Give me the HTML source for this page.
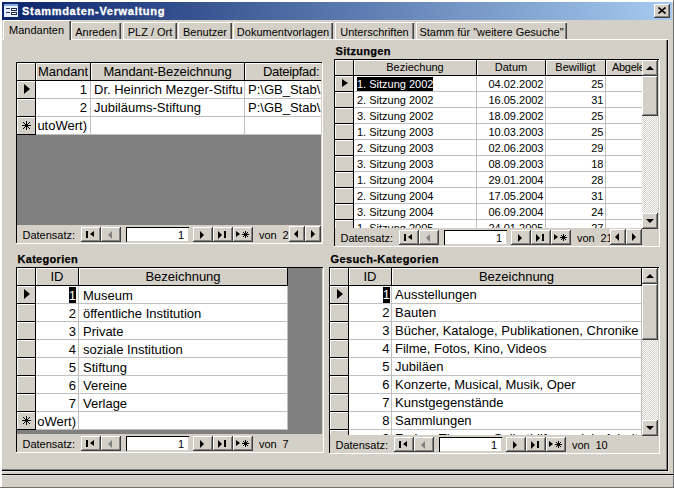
<!DOCTYPE html>
<html><head><meta charset="utf-8"><style>
*{margin:0;padding:0;box-sizing:border-box}
html,body{width:674px;height:488px;overflow:hidden}
body{position:relative;background:#d4d0c8;font-family:"Liberation Sans", sans-serif;color:#000}
.a{position:absolute}
.t{position:absolute;white-space:nowrap}
</style></head><body>
<div class="a" style="left:0px;top:0px;width:674px;height:488px;background:#d4d0c8;box-shadow:inset -1px -1px #707070,inset 2px 2px #fff;"></div>
<div class="a" style="left:2px;top:2px;width:670px;height:18px;background:linear-gradient(to right,#0a246a,#a6caf0);"></div>
<div class="a" style="left:4px;top:4px;width:14px;height:13px;background:#e6eefc;"></div>
<div class="a" style="left:4px;top:4px;width:14px;height:2px;background:#88a8e0;"></div>
<div class="a" style="left:6px;top:8px;width:4px;height:1px;background:#203050;"></div>
<div class="a" style="left:11px;top:8px;width:6px;height:3px;background:#fff;border:1px solid #203050;"></div>
<div class="a" style="left:6px;top:12px;width:4px;height:1px;background:#203050;"></div>
<div class="a" style="left:11px;top:12px;width:6px;height:3px;background:#fff;border:1px solid #203050;"></div>
<div class="t" style="left:22px;top:5.69px;font-size:11px;line-height:11px;font-weight:bold;color:#fff;letter-spacing:0.7px;-webkit-text-stroke:0.3px #fff;">Stammdaten-Verwaltung</div>
<div class="a" style="left:654px;top:4px;width:16px;height:14px;background:#d4d0c8;box-shadow:inset -1px -1px #404040,inset 1px 1px #fff,inset -2px -2px #808080;"></div>
<svg class="a" style="left:658px;top:7px" width="8" height="7" viewBox="0 0 8 7"><path d="M0.5 0.5L7.5 6.5M7.5 0.5L0.5 6.5" stroke="#000" stroke-width="1.6"/></svg>
<div class="a" style="left:2px;top:39px;width:666px;height:432px;box-shadow:inset 0 1px #fff,inset -1px -1px #000,inset -2px -2px #808080;"></div>
<div class="a" style="left:2px;top:474px;width:671px;height:1px;background:#000;"></div>
<div class="a" style="left:2px;top:475px;width:671px;height:1px;background:#e4e2de;"></div>
<div class="a" style="left:2px;top:471px;width:666px;height:1px;background:#e4e2de;"></div>
<div class="a" style="left:668px;top:39px;width:1px;height:435px;background:#e4e2de;"></div>
<div class="a" style="left:71px;top:22px;width:50px;height:17px;background:#d4d0c8;box-shadow:inset 1px 1px #fff,inset -1px 0 #404040,inset -2px 0 #808080;"></div>
<div class="t" style="left:71px;top:27.19px;font-size:11px;line-height:11px;width:50px;text-align:center;">Anreden</div>
<div class="a" style="left:123px;top:22px;width:54px;height:17px;background:#d4d0c8;box-shadow:inset 1px 1px #fff,inset -1px 0 #404040,inset -2px 0 #808080;"></div>
<div class="t" style="left:123px;top:27.19px;font-size:11px;line-height:11px;width:54px;text-align:center;">PLZ / Ort</div>
<div class="a" style="left:178px;top:22px;width:54px;height:17px;background:#d4d0c8;box-shadow:inset 1px 1px #fff,inset -1px 0 #404040,inset -2px 0 #808080;"></div>
<div class="t" style="left:178px;top:27.19px;font-size:11px;line-height:11px;width:54px;text-align:center;">Benutzer</div>
<div class="a" style="left:233px;top:22px;width:100px;height:17px;background:#d4d0c8;box-shadow:inset 1px 1px #fff,inset -1px 0 #404040,inset -2px 0 #808080;"></div>
<div class="t" style="left:233px;top:27.19px;font-size:11px;line-height:11px;width:100px;text-align:center;">Dokumentvorlagen</div>
<div class="a" style="left:335px;top:22px;width:79px;height:17px;background:#d4d0c8;box-shadow:inset 1px 1px #fff,inset -1px 0 #404040,inset -2px 0 #808080;"></div>
<div class="t" style="left:335px;top:27.19px;font-size:11px;line-height:11px;width:79px;text-align:center;">Unterschriften</div>
<div class="a" style="left:416px;top:22px;width:151px;height:17px;background:#d4d0c8;box-shadow:inset 1px 1px #fff,inset -1px 0 #404040,inset -2px 0 #808080;"></div>
<div class="t" style="left:416px;top:27.19px;font-size:11px;line-height:11px;width:151px;text-align:center;">Stamm für "weitere Gesuche"</div>
<div class="a" style="left:3px;top:20px;width:68px;height:20px;background:#d4d0c8;box-shadow:inset 1px 1px #fff,inset -1px 0 #404040,inset -2px 0 #808080;"></div>
<div class="a" style="left:4px;top:39px;width:65px;height:1px;background:#d4d0c8;"></div>
<div class="t" style="left:9px;top:24.69px;font-size:11px;line-height:11px;">Mandanten</div>
<div class="a" style="left:15px;top:61px;width:308px;height:183px;background:#d4d0c8;box-shadow:inset 1px 1px #d4d0c8,inset -1px -1px #fff,inset 2px 2px #000,inset -2px -2px #d4d0c8;"></div>
<div class="a" style="left:17px;top:63px;width:304px;height:162px;overflow:hidden;background:#808080;font-size:13px;line-height:13px;">
<div class="a" style="left:0px;top:0px;width:19px;height:18px;background:#d4d0c8;box-shadow:inset 1px 1px #fff;border-right:1px solid #000;border-bottom:1px solid #000;"></div>
<div class="a" style="left:19px;top:0px;width:55px;height:18px;background:#d4d0c8;box-shadow:inset 1px 1px #fff;border-right:1px solid #000;border-bottom:1px solid #000;"></div>
<div class="t" style="left:19px;top:2.00px;width:54px;text-align:center;font-size:13px;line-height:13px;letter-spacing:-0.1px">Mandant</div>
<div class="a" style="left:74px;top:0px;width:154px;height:18px;background:#d4d0c8;box-shadow:inset 1px 1px #fff;border-right:1px solid #000;border-bottom:1px solid #000;"></div>
<div class="t" style="left:74px;top:2.00px;width:153px;text-align:center;font-size:13px;line-height:13px;letter-spacing:-0.1px">Mandant-Bezeichnung</div>
<div class="a" style="left:228px;top:0px;width:120px;height:18px;background:#d4d0c8;box-shadow:inset 1px 1px #fff;border-right:1px solid #000;border-bottom:1px solid #000;"></div>
<div class="t" style="left:246px;top:2.00px;font-size:13px;line-height:13px;letter-spacing:-0.3px">Dateipfad:</div>
<div class="a" style="left:0px;top:18px;width:19px;height:18px;background:#d4d0c8;box-shadow:inset 1px 1px #fff;border-right:1px solid #000;border-bottom:1px solid #000;"></div>
<div class="a" style="left:7px;top:21.0px;width:0;height:0;border-left:6px solid #000;border-top:5.5px solid transparent;border-bottom:5.5px solid transparent;"></div>
<div class="a" style="left:19px;top:18px;width:55px;height:18px;background:#fff;border-right:1px solid #c0c0c0;border-bottom:1px solid #c0c0c0;"></div>
<div class="a" style="left:19px;top:18px;width:51px;height:17px;overflow:hidden;"><div class="t" style="right:0;top:2.30px;">1</div></div>
<div class="a" style="left:74px;top:18px;width:154px;height:18px;background:#fff;border-right:1px solid #c0c0c0;border-bottom:1px solid #c0c0c0;"></div>
<div class="a" style="left:74px;top:18px;width:153px;height:17px;overflow:hidden;"><div class="t" style="left:3px;top:2.30px;">Dr. Heinrich Mezger-Stiftu</div></div>
<div class="a" style="left:228px;top:18px;width:120px;height:18px;background:#fff;border-right:1px solid #c0c0c0;border-bottom:1px solid #c0c0c0;"></div>
<div class="a" style="left:228px;top:18px;width:119px;height:17px;overflow:hidden;"><div class="t" style="left:3px;top:2.30px;">P:\GB_Stab\Stiftung</div></div>
<div class="a" style="left:0px;top:36px;width:19px;height:18px;background:#d4d0c8;box-shadow:inset 1px 1px #fff;border-right:1px solid #000;border-bottom:1px solid #000;"></div>
<div class="a" style="left:19px;top:36px;width:55px;height:18px;background:#fff;border-right:1px solid #c0c0c0;border-bottom:1px solid #c0c0c0;"></div>
<div class="a" style="left:19px;top:36px;width:51px;height:17px;overflow:hidden;"><div class="t" style="right:0;top:2.30px;">2</div></div>
<div class="a" style="left:74px;top:36px;width:154px;height:18px;background:#fff;border-right:1px solid #c0c0c0;border-bottom:1px solid #c0c0c0;"></div>
<div class="a" style="left:74px;top:36px;width:153px;height:17px;overflow:hidden;"><div class="t" style="left:3px;top:2.30px;">Jubiläums-Stiftung</div></div>
<div class="a" style="left:228px;top:36px;width:120px;height:18px;background:#fff;border-right:1px solid #c0c0c0;border-bottom:1px solid #c0c0c0;"></div>
<div class="a" style="left:228px;top:36px;width:119px;height:17px;overflow:hidden;"><div class="t" style="left:3px;top:2.30px;">P:\GB_Stab\Stiftung</div></div>
<div class="a" style="left:0px;top:54px;width:19px;height:18px;background:#d4d0c8;box-shadow:inset 1px 1px #fff;border-right:1px solid #000;border-bottom:1px solid #000;"></div>
<svg class="a" style="left:5px;top:58px" width="9" height="9" viewBox="0 0 9 9" shape-rendering="crispEdges"><path d="M4 0h1v9h-1zM0 4h9v1h-9zM3 3h3v3h-3zM1 1h1v1h-1zM2 2h1v1h-1zM7 1h1v1h-1zM6 2h1v1h-1zM1 7h1v1h-1zM2 6h1v1h-1zM7 7h1v1h-1zM6 6h1v1h-1z" fill="#000"/></svg>
<div class="a" style="left:19px;top:54px;width:55px;height:18px;background:#fff;border-right:1px solid #c0c0c0;border-bottom:1px solid #c0c0c0;"></div>
<div class="a" style="left:19px;top:54px;width:51px;height:17px;overflow:hidden;"><div class="t" style="right:0;top:2.30px;">utoWert)</div></div>
<div class="a" style="left:74px;top:54px;width:154px;height:18px;background:#fff;border-right:1px solid #c0c0c0;border-bottom:1px solid #c0c0c0;"></div>
<div class="a" style="left:228px;top:54px;width:120px;height:18px;background:#fff;border-right:1px solid #c0c0c0;border-bottom:1px solid #c0c0c0;"></div>
</div>
<div class="a" style="left:17px;top:225px;width:304px;height:17px;background:#d4d0c8;"></div>
<div class="t" style="left:22.5px;top:230.19px;font-size:11px;line-height:11px;">Datensatz:</div>
<div class="a" style="left:81px;top:227px;width:20px;height:15px;background:#d4d0c8;box-shadow:inset -1px -1px #404040,inset 1px 1px #fff,inset -2px -2px #808080;"></div>
<div class="a" style="left:86px;top:231px;width:2px;height:7px;background:#000;"></div>
<div class="a" style="left:90px;top:231px;width:0px;height:0px;border-right:4px solid #000;border-top:3.5px solid transparent;border-bottom:3.5px solid transparent;"></div>
<div class="a" style="left:101px;top:227px;width:20px;height:15px;background:#d4d0c8;box-shadow:inset -1px -1px #404040,inset 1px 1px #fff,inset -2px -2px #808080;"></div>
<div class="a" style="left:108px;top:230.5px;width:0px;height:0px;border-right:4px solid #808080;border-top:4px solid transparent;border-bottom:4px solid transparent;"></div>
<div class="a" style="left:126px;top:227px;width:63px;height:15px;background:#fff;box-shadow:inset 1px 1px #000,inset -1px -1px #d4d0c8;"></div>
<div class="t" style="left:126px;top:230.19px;font-size:11px;line-height:11px;width:58px;text-align:right;">1</div>
<div class="a" style="left:193px;top:227px;width:20px;height:15px;background:#d4d0c8;box-shadow:inset -1px -1px #404040,inset 1px 1px #fff,inset -2px -2px #808080;"></div>
<div class="a" style="left:200px;top:230.5px;width:0px;height:0px;border-left:4px solid #000;border-top:4px solid transparent;border-bottom:4px solid transparent;"></div>
<div class="a" style="left:213px;top:227px;width:20px;height:15px;background:#d4d0c8;box-shadow:inset -1px -1px #404040,inset 1px 1px #fff,inset -2px -2px #808080;"></div>
<div class="a" style="left:218px;top:230.5px;width:0px;height:0px;border-left:4px solid #000;border-top:4px solid transparent;border-bottom:4px solid transparent;"></div>
<div class="a" style="left:224px;top:231px;width:2px;height:7px;background:#000;"></div>
<div class="a" style="left:233px;top:227px;width:20px;height:15px;background:#d4d0c8;box-shadow:inset -1px -1px #404040,inset 1px 1px #fff,inset -2px -2px #808080;"></div>
<div class="a" style="left:236px;top:231px;width:0px;height:0px;border-left:4px solid #000;border-top:3.5px solid transparent;border-bottom:3.5px solid transparent;"></div>
<svg class="a" style="left:242px;top:231px" width="7" height="7" viewBox="0 0 7 7" shape-rendering="crispEdges"><path d="M3 0h1v7h-1zM0 3h7v1h-7zM2 2h3v3h-3zM1 1h1v1h-1zM5 1h1v1h-1zM1 5h1v1h-1zM5 5h1v1h-1z" fill="#000"/></svg>
<div class="t" style="left:259px;top:230.19px;font-size:11px;line-height:11px;">von</div>
<div class="t" style="left:282.5px;top:230.19px;font-size:11px;line-height:11px;">2</div>
<div class="a" style="left:289px;top:226px;width:16px;height:16px;background:#d4d0c8;box-shadow:inset -1px -1px #404040,inset 1px 1px #fff,inset -2px -2px #808080;"></div>
<div class="a" style="left:294px;top:230px;width:0px;height:0px;border-right:4px solid #000;border-top:4px solid transparent;border-bottom:4px solid transparent;"></div>
<div class="a" style="left:305px;top:226px;width:16px;height:16px;background:#d4d0c8;box-shadow:inset -1px -1px #404040,inset 1px 1px #fff,inset -2px -2px #808080;"></div>
<div class="a" style="left:311px;top:230px;width:0px;height:0px;border-left:4px solid #000;border-top:4px solid transparent;border-bottom:4px solid transparent;"></div>
<div class="a" style="left:333px;top:58px;width:327px;height:189px;background:#d4d0c8;box-shadow:inset 1px 1px #d4d0c8,inset -1px -1px #fff,inset 2px 2px #000,inset -2px -2px #d4d0c8;"></div>
<div class="a" style="left:335px;top:60px;width:307px;height:168px;overflow:hidden;background:#808080;font-size:11px;line-height:11px;">
<div class="a" style="left:0px;top:0px;width:19px;height:16px;background:#d4d0c8;box-shadow:inset 1px 1px #fff;border-right:1px solid #000;border-bottom:1px solid #000;"></div>
<div class="a" style="left:19px;top:0px;width:123px;height:16px;background:#d4d0c8;box-shadow:inset 1px 1px #fff;border-right:1px solid #000;border-bottom:1px solid #000;"></div>
<div class="t" style="left:19px;top:2.19px;width:122px;text-align:center;font-size:11px;line-height:11px;letter-spacing:0px">Beziechung</div>
<div class="a" style="left:142px;top:0px;width:69px;height:16px;background:#d4d0c8;box-shadow:inset 1px 1px #fff;border-right:1px solid #000;border-bottom:1px solid #000;"></div>
<div class="t" style="left:142px;top:2.19px;width:68px;text-align:center;font-size:11px;line-height:11px;letter-spacing:0px">Datum</div>
<div class="a" style="left:211px;top:0px;width:60px;height:16px;background:#d4d0c8;box-shadow:inset 1px 1px #fff;border-right:1px solid #000;border-bottom:1px solid #000;"></div>
<div class="t" style="left:211px;top:2.19px;width:59px;text-align:center;font-size:11px;line-height:11px;letter-spacing:0px">Bewilligt</div>
<div class="a" style="left:271px;top:0px;width:80px;height:16px;background:#d4d0c8;box-shadow:inset 1px 1px #fff;border-right:1px solid #000;border-bottom:1px solid #000;"></div>
<div class="t" style="left:277px;top:2.19px;font-size:11px;line-height:11px;letter-spacing:-0.3px">Abgelehnt</div>
<div class="a" style="left:0px;top:16px;width:19px;height:16px;background:#d4d0c8;box-shadow:inset 1px 1px #fff;border-right:1px solid #000;border-bottom:1px solid #000;"></div>
<div class="a" style="left:7px;top:19.0px;width:0;height:0;border-left:6px solid #000;border-top:4.5px solid transparent;border-bottom:4.5px solid transparent;"></div>
<div class="a" style="left:19px;top:16px;width:123px;height:16px;background:#fff;border-right:1px solid #c0c0c0;border-bottom:1px solid #c0c0c0;"></div>
<div class="a" style="left:19px;top:16px;width:122px;height:15px;overflow:hidden;"><div class="a" style="left:3px;top:1px;height:14px;background:#000;color:#fff;white-space:nowrap"><span style="position:relative;top:1.89px">1. Sitzung 2002</span></div></div>
<div class="a" style="left:142px;top:16px;width:69px;height:16px;background:#fff;border-right:1px solid #c0c0c0;border-bottom:1px solid #c0c0c0;"></div>
<div class="a" style="left:142px;top:16px;width:66.5px;height:15px;overflow:hidden;"><div class="t" style="right:0;top:2.89px;">04.02.2002</div></div>
<div class="a" style="left:211px;top:16px;width:60px;height:16px;background:#fff;border-right:1px solid #c0c0c0;border-bottom:1px solid #c0c0c0;"></div>
<div class="a" style="left:211px;top:16px;width:57.5px;height:15px;overflow:hidden;"><div class="t" style="right:0;top:2.89px;">25</div></div>
<div class="a" style="left:271px;top:16px;width:80px;height:16px;background:#fff;border-right:1px solid #c0c0c0;border-bottom:1px solid #c0c0c0;"></div>
<div class="a" style="left:0px;top:32px;width:19px;height:16px;background:#d4d0c8;box-shadow:inset 1px 1px #fff;border-right:1px solid #000;border-bottom:1px solid #000;"></div>
<div class="a" style="left:19px;top:32px;width:123px;height:16px;background:#fff;border-right:1px solid #c0c0c0;border-bottom:1px solid #c0c0c0;"></div>
<div class="a" style="left:19px;top:32px;width:122px;height:15px;overflow:hidden;"><div class="t" style="left:3px;top:2.89px;">2. Sitzung 2002</div></div>
<div class="a" style="left:142px;top:32px;width:69px;height:16px;background:#fff;border-right:1px solid #c0c0c0;border-bottom:1px solid #c0c0c0;"></div>
<div class="a" style="left:142px;top:32px;width:66.5px;height:15px;overflow:hidden;"><div class="t" style="right:0;top:2.89px;">16.05.2002</div></div>
<div class="a" style="left:211px;top:32px;width:60px;height:16px;background:#fff;border-right:1px solid #c0c0c0;border-bottom:1px solid #c0c0c0;"></div>
<div class="a" style="left:211px;top:32px;width:57.5px;height:15px;overflow:hidden;"><div class="t" style="right:0;top:2.89px;">31</div></div>
<div class="a" style="left:271px;top:32px;width:80px;height:16px;background:#fff;border-right:1px solid #c0c0c0;border-bottom:1px solid #c0c0c0;"></div>
<div class="a" style="left:0px;top:48px;width:19px;height:16px;background:#d4d0c8;box-shadow:inset 1px 1px #fff;border-right:1px solid #000;border-bottom:1px solid #000;"></div>
<div class="a" style="left:19px;top:48px;width:123px;height:16px;background:#fff;border-right:1px solid #c0c0c0;border-bottom:1px solid #c0c0c0;"></div>
<div class="a" style="left:19px;top:48px;width:122px;height:15px;overflow:hidden;"><div class="t" style="left:3px;top:2.89px;">3. Sitzung 2002</div></div>
<div class="a" style="left:142px;top:48px;width:69px;height:16px;background:#fff;border-right:1px solid #c0c0c0;border-bottom:1px solid #c0c0c0;"></div>
<div class="a" style="left:142px;top:48px;width:66.5px;height:15px;overflow:hidden;"><div class="t" style="right:0;top:2.89px;">18.09.2002</div></div>
<div class="a" style="left:211px;top:48px;width:60px;height:16px;background:#fff;border-right:1px solid #c0c0c0;border-bottom:1px solid #c0c0c0;"></div>
<div class="a" style="left:211px;top:48px;width:57.5px;height:15px;overflow:hidden;"><div class="t" style="right:0;top:2.89px;">25</div></div>
<div class="a" style="left:271px;top:48px;width:80px;height:16px;background:#fff;border-right:1px solid #c0c0c0;border-bottom:1px solid #c0c0c0;"></div>
<div class="a" style="left:0px;top:64px;width:19px;height:16px;background:#d4d0c8;box-shadow:inset 1px 1px #fff;border-right:1px solid #000;border-bottom:1px solid #000;"></div>
<div class="a" style="left:19px;top:64px;width:123px;height:16px;background:#fff;border-right:1px solid #c0c0c0;border-bottom:1px solid #c0c0c0;"></div>
<div class="a" style="left:19px;top:64px;width:122px;height:15px;overflow:hidden;"><div class="t" style="left:3px;top:2.89px;">1. Sitzung 2003</div></div>
<div class="a" style="left:142px;top:64px;width:69px;height:16px;background:#fff;border-right:1px solid #c0c0c0;border-bottom:1px solid #c0c0c0;"></div>
<div class="a" style="left:142px;top:64px;width:66.5px;height:15px;overflow:hidden;"><div class="t" style="right:0;top:2.89px;">10.03.2003</div></div>
<div class="a" style="left:211px;top:64px;width:60px;height:16px;background:#fff;border-right:1px solid #c0c0c0;border-bottom:1px solid #c0c0c0;"></div>
<div class="a" style="left:211px;top:64px;width:57.5px;height:15px;overflow:hidden;"><div class="t" style="right:0;top:2.89px;">25</div></div>
<div class="a" style="left:271px;top:64px;width:80px;height:16px;background:#fff;border-right:1px solid #c0c0c0;border-bottom:1px solid #c0c0c0;"></div>
<div class="a" style="left:0px;top:80px;width:19px;height:16px;background:#d4d0c8;box-shadow:inset 1px 1px #fff;border-right:1px solid #000;border-bottom:1px solid #000;"></div>
<div class="a" style="left:19px;top:80px;width:123px;height:16px;background:#fff;border-right:1px solid #c0c0c0;border-bottom:1px solid #c0c0c0;"></div>
<div class="a" style="left:19px;top:80px;width:122px;height:15px;overflow:hidden;"><div class="t" style="left:3px;top:2.89px;">2. Sitzung 2003</div></div>
<div class="a" style="left:142px;top:80px;width:69px;height:16px;background:#fff;border-right:1px solid #c0c0c0;border-bottom:1px solid #c0c0c0;"></div>
<div class="a" style="left:142px;top:80px;width:66.5px;height:15px;overflow:hidden;"><div class="t" style="right:0;top:2.89px;">02.06.2003</div></div>
<div class="a" style="left:211px;top:80px;width:60px;height:16px;background:#fff;border-right:1px solid #c0c0c0;border-bottom:1px solid #c0c0c0;"></div>
<div class="a" style="left:211px;top:80px;width:57.5px;height:15px;overflow:hidden;"><div class="t" style="right:0;top:2.89px;">29</div></div>
<div class="a" style="left:271px;top:80px;width:80px;height:16px;background:#fff;border-right:1px solid #c0c0c0;border-bottom:1px solid #c0c0c0;"></div>
<div class="a" style="left:0px;top:96px;width:19px;height:16px;background:#d4d0c8;box-shadow:inset 1px 1px #fff;border-right:1px solid #000;border-bottom:1px solid #000;"></div>
<div class="a" style="left:19px;top:96px;width:123px;height:16px;background:#fff;border-right:1px solid #c0c0c0;border-bottom:1px solid #c0c0c0;"></div>
<div class="a" style="left:19px;top:96px;width:122px;height:15px;overflow:hidden;"><div class="t" style="left:3px;top:2.89px;">3. Sitzung 2003</div></div>
<div class="a" style="left:142px;top:96px;width:69px;height:16px;background:#fff;border-right:1px solid #c0c0c0;border-bottom:1px solid #c0c0c0;"></div>
<div class="a" style="left:142px;top:96px;width:66.5px;height:15px;overflow:hidden;"><div class="t" style="right:0;top:2.89px;">08.09.2003</div></div>
<div class="a" style="left:211px;top:96px;width:60px;height:16px;background:#fff;border-right:1px solid #c0c0c0;border-bottom:1px solid #c0c0c0;"></div>
<div class="a" style="left:211px;top:96px;width:57.5px;height:15px;overflow:hidden;"><div class="t" style="right:0;top:2.89px;">18</div></div>
<div class="a" style="left:271px;top:96px;width:80px;height:16px;background:#fff;border-right:1px solid #c0c0c0;border-bottom:1px solid #c0c0c0;"></div>
<div class="a" style="left:0px;top:112px;width:19px;height:16px;background:#d4d0c8;box-shadow:inset 1px 1px #fff;border-right:1px solid #000;border-bottom:1px solid #000;"></div>
<div class="a" style="left:19px;top:112px;width:123px;height:16px;background:#fff;border-right:1px solid #c0c0c0;border-bottom:1px solid #c0c0c0;"></div>
<div class="a" style="left:19px;top:112px;width:122px;height:15px;overflow:hidden;"><div class="t" style="left:3px;top:2.89px;">1. Sitzung 2004</div></div>
<div class="a" style="left:142px;top:112px;width:69px;height:16px;background:#fff;border-right:1px solid #c0c0c0;border-bottom:1px solid #c0c0c0;"></div>
<div class="a" style="left:142px;top:112px;width:66.5px;height:15px;overflow:hidden;"><div class="t" style="right:0;top:2.89px;">29.01.2004</div></div>
<div class="a" style="left:211px;top:112px;width:60px;height:16px;background:#fff;border-right:1px solid #c0c0c0;border-bottom:1px solid #c0c0c0;"></div>
<div class="a" style="left:211px;top:112px;width:57.5px;height:15px;overflow:hidden;"><div class="t" style="right:0;top:2.89px;">28</div></div>
<div class="a" style="left:271px;top:112px;width:80px;height:16px;background:#fff;border-right:1px solid #c0c0c0;border-bottom:1px solid #c0c0c0;"></div>
<div class="a" style="left:0px;top:128px;width:19px;height:16px;background:#d4d0c8;box-shadow:inset 1px 1px #fff;border-right:1px solid #000;border-bottom:1px solid #000;"></div>
<div class="a" style="left:19px;top:128px;width:123px;height:16px;background:#fff;border-right:1px solid #c0c0c0;border-bottom:1px solid #c0c0c0;"></div>
<div class="a" style="left:19px;top:128px;width:122px;height:15px;overflow:hidden;"><div class="t" style="left:3px;top:2.89px;">2. Sitzung 2004</div></div>
<div class="a" style="left:142px;top:128px;width:69px;height:16px;background:#fff;border-right:1px solid #c0c0c0;border-bottom:1px solid #c0c0c0;"></div>
<div class="a" style="left:142px;top:128px;width:66.5px;height:15px;overflow:hidden;"><div class="t" style="right:0;top:2.89px;">17.05.2004</div></div>
<div class="a" style="left:211px;top:128px;width:60px;height:16px;background:#fff;border-right:1px solid #c0c0c0;border-bottom:1px solid #c0c0c0;"></div>
<div class="a" style="left:211px;top:128px;width:57.5px;height:15px;overflow:hidden;"><div class="t" style="right:0;top:2.89px;">31</div></div>
<div class="a" style="left:271px;top:128px;width:80px;height:16px;background:#fff;border-right:1px solid #c0c0c0;border-bottom:1px solid #c0c0c0;"></div>
<div class="a" style="left:0px;top:144px;width:19px;height:16px;background:#d4d0c8;box-shadow:inset 1px 1px #fff;border-right:1px solid #000;border-bottom:1px solid #000;"></div>
<div class="a" style="left:19px;top:144px;width:123px;height:16px;background:#fff;border-right:1px solid #c0c0c0;border-bottom:1px solid #c0c0c0;"></div>
<div class="a" style="left:19px;top:144px;width:122px;height:15px;overflow:hidden;"><div class="t" style="left:3px;top:2.89px;">3. Sitzung 2004</div></div>
<div class="a" style="left:142px;top:144px;width:69px;height:16px;background:#fff;border-right:1px solid #c0c0c0;border-bottom:1px solid #c0c0c0;"></div>
<div class="a" style="left:142px;top:144px;width:66.5px;height:15px;overflow:hidden;"><div class="t" style="right:0;top:2.89px;">06.09.2004</div></div>
<div class="a" style="left:211px;top:144px;width:60px;height:16px;background:#fff;border-right:1px solid #c0c0c0;border-bottom:1px solid #c0c0c0;"></div>
<div class="a" style="left:211px;top:144px;width:57.5px;height:15px;overflow:hidden;"><div class="t" style="right:0;top:2.89px;">24</div></div>
<div class="a" style="left:271px;top:144px;width:80px;height:16px;background:#fff;border-right:1px solid #c0c0c0;border-bottom:1px solid #c0c0c0;"></div>
<div class="a" style="left:0px;top:160px;width:19px;height:16px;background:#d4d0c8;box-shadow:inset 1px 1px #fff;border-right:1px solid #000;border-bottom:1px solid #000;"></div>
<div class="a" style="left:19px;top:160px;width:123px;height:16px;background:#fff;border-right:1px solid #c0c0c0;border-bottom:1px solid #c0c0c0;"></div>
<div class="a" style="left:19px;top:160px;width:122px;height:15px;overflow:hidden;"><div class="t" style="left:3px;top:2.89px;">1. Sitzung 2005</div></div>
<div class="a" style="left:142px;top:160px;width:69px;height:16px;background:#fff;border-right:1px solid #c0c0c0;border-bottom:1px solid #c0c0c0;"></div>
<div class="a" style="left:142px;top:160px;width:66.5px;height:15px;overflow:hidden;"><div class="t" style="right:0;top:2.89px;">24.01.2005</div></div>
<div class="a" style="left:211px;top:160px;width:60px;height:16px;background:#fff;border-right:1px solid #c0c0c0;border-bottom:1px solid #c0c0c0;"></div>
<div class="a" style="left:211px;top:160px;width:57.5px;height:15px;overflow:hidden;"><div class="t" style="right:0;top:2.89px;">27</div></div>
<div class="a" style="left:271px;top:160px;width:80px;height:16px;background:#fff;border-right:1px solid #c0c0c0;border-bottom:1px solid #c0c0c0;"></div>
</div>
<div class="a" style="left:335px;top:228px;width:323px;height:17px;background:#d4d0c8;"></div>
<div class="t" style="left:340.5px;top:233.19px;font-size:11px;line-height:11px;">Datensatz:</div>
<div class="a" style="left:399px;top:230px;width:20px;height:15px;background:#d4d0c8;box-shadow:inset -1px -1px #404040,inset 1px 1px #fff,inset -2px -2px #808080;"></div>
<div class="a" style="left:404px;top:234px;width:2px;height:7px;background:#000;"></div>
<div class="a" style="left:408px;top:234px;width:0px;height:0px;border-right:4px solid #000;border-top:3.5px solid transparent;border-bottom:3.5px solid transparent;"></div>
<div class="a" style="left:419px;top:230px;width:20px;height:15px;background:#d4d0c8;box-shadow:inset -1px -1px #404040,inset 1px 1px #fff,inset -2px -2px #808080;"></div>
<div class="a" style="left:426px;top:233.5px;width:0px;height:0px;border-right:4px solid #808080;border-top:4px solid transparent;border-bottom:4px solid transparent;"></div>
<div class="a" style="left:444px;top:230px;width:63px;height:15px;background:#fff;box-shadow:inset 1px 1px #000,inset -1px -1px #d4d0c8;"></div>
<div class="t" style="left:444px;top:233.19px;font-size:11px;line-height:11px;width:58px;text-align:right;">1</div>
<div class="a" style="left:511px;top:230px;width:20px;height:15px;background:#d4d0c8;box-shadow:inset -1px -1px #404040,inset 1px 1px #fff,inset -2px -2px #808080;"></div>
<div class="a" style="left:518px;top:233.5px;width:0px;height:0px;border-left:4px solid #000;border-top:4px solid transparent;border-bottom:4px solid transparent;"></div>
<div class="a" style="left:531px;top:230px;width:20px;height:15px;background:#d4d0c8;box-shadow:inset -1px -1px #404040,inset 1px 1px #fff,inset -2px -2px #808080;"></div>
<div class="a" style="left:536px;top:233.5px;width:0px;height:0px;border-left:4px solid #000;border-top:4px solid transparent;border-bottom:4px solid transparent;"></div>
<div class="a" style="left:542px;top:234px;width:2px;height:7px;background:#000;"></div>
<div class="a" style="left:551px;top:230px;width:20px;height:15px;background:#d4d0c8;box-shadow:inset -1px -1px #404040,inset 1px 1px #fff,inset -2px -2px #808080;"></div>
<div class="a" style="left:554px;top:234px;width:0px;height:0px;border-left:4px solid #000;border-top:3.5px solid transparent;border-bottom:3.5px solid transparent;"></div>
<svg class="a" style="left:560px;top:234px" width="7" height="7" viewBox="0 0 7 7" shape-rendering="crispEdges"><path d="M3 0h1v7h-1zM0 3h7v1h-7zM2 2h3v3h-3zM1 1h1v1h-1zM5 1h1v1h-1zM1 5h1v1h-1zM5 5h1v1h-1z" fill="#000"/></svg>
<div class="t" style="left:577px;top:233.19px;font-size:11px;line-height:11px;">von</div>
<div class="t" style="left:600.5px;top:233.19px;font-size:11px;line-height:11px;">21</div>
<div class="a" style="left:642px;top:60px;width:16px;height:169px;background-color:#fff;background-image:repeating-conic-gradient(#d4d0c8 0 25%,#fff 0 50%);background-size:2px 2px;"></div>
<div class="a" style="left:642px;top:60px;width:16px;height:16px;background:#d4d0c8;box-shadow:inset -1px -1px #404040,inset 1px 1px #fff,inset -2px -2px #808080;"></div>
<div class="a" style="left:646px;top:66px;width:0px;height:0px;border-bottom:4px solid #000;border-left:4px solid transparent;border-right:4px solid transparent;"></div>
<div class="a" style="left:642px;top:76px;width:16px;height:40px;background:#d4d0c8;box-shadow:inset -1px -1px #404040,inset 1px 1px #fff,inset -2px -2px #808080;"></div>
<div class="a" style="left:642px;top:213px;width:16px;height:16px;background:#d4d0c8;box-shadow:inset -1px -1px #404040,inset 1px 1px #fff,inset -2px -2px #808080;"></div>
<div class="a" style="left:646px;top:219px;width:0px;height:0px;border-top:4px solid #000;border-left:4px solid transparent;border-right:4px solid transparent;"></div>
<div class="a" style="left:610px;top:229px;width:16px;height:16px;background:#d4d0c8;box-shadow:inset -1px -1px #404040,inset 1px 1px #fff,inset -2px -2px #808080;"></div>
<div class="a" style="left:615px;top:233px;width:0px;height:0px;border-right:4px solid #000;border-top:4px solid transparent;border-bottom:4px solid transparent;"></div>
<div class="a" style="left:626px;top:229px;width:16px;height:16px;background:#d4d0c8;box-shadow:inset -1px -1px #404040,inset 1px 1px #fff,inset -2px -2px #808080;"></div>
<div class="a" style="left:632px;top:233px;width:0px;height:0px;border-left:4px solid #000;border-top:4px solid transparent;border-bottom:4px solid transparent;"></div>
<div class="a" style="left:15px;top:266px;width:309px;height:187px;background:#d4d0c8;box-shadow:inset 1px 1px #d4d0c8,inset -1px -1px #fff,inset 2px 2px #000,inset -2px -2px #d4d0c8;"></div>
<div class="a" style="left:17px;top:268px;width:305px;height:166px;overflow:hidden;background:#808080;font-size:13px;line-height:13px;">
<div class="a" style="left:0px;top:0px;width:19px;height:18px;background:#d4d0c8;box-shadow:inset 1px 1px #fff;border-right:1px solid #000;border-bottom:1px solid #000;"></div>
<div class="a" style="left:19px;top:0px;width:43px;height:18px;background:#d4d0c8;box-shadow:inset 1px 1px #fff;border-right:1px solid #000;border-bottom:1px solid #000;"></div>
<div class="t" style="left:19px;top:2.00px;width:42px;text-align:center;font-size:13px;line-height:13px;letter-spacing:0px">ID</div>
<div class="a" style="left:62px;top:0px;width:209px;height:18px;background:#d4d0c8;box-shadow:inset 1px 1px #fff;border-right:1px solid #000;border-bottom:1px solid #000;"></div>
<div class="t" style="left:62px;top:2.00px;width:208px;text-align:center;font-size:13px;line-height:13px;letter-spacing:0px">Bezeichnung</div>
<div class="a" style="left:0px;top:18px;width:19px;height:18px;background:#d4d0c8;box-shadow:inset 1px 1px #fff;border-right:1px solid #000;border-bottom:1px solid #000;"></div>
<div class="a" style="left:7px;top:21.0px;width:0;height:0;border-left:6px solid #000;border-top:5.5px solid transparent;border-bottom:5.5px solid transparent;"></div>
<div class="a" style="left:19px;top:18px;width:43px;height:18px;background:#fff;border-right:1px solid #c0c0c0;border-bottom:1px solid #c0c0c0;"></div>
<div class="a" style="left:19px;top:18px;width:40px;height:17px;overflow:hidden;"><div class="a" style="right:0;top:1px;height:16px;background:#000;color:#fff;white-space:nowrap"><span style="position:relative;top:1.70px">1</span></div></div>
<div class="a" style="left:62px;top:18px;width:209px;height:18px;background:#fff;border-right:1px solid #c0c0c0;border-bottom:1px solid #c0c0c0;"></div>
<div class="a" style="left:62px;top:18px;width:208px;height:17px;overflow:hidden;"><div class="t" style="left:4px;top:2.70px;">Museum</div></div>
<div class="a" style="left:0px;top:36px;width:19px;height:18px;background:#d4d0c8;box-shadow:inset 1px 1px #fff;border-right:1px solid #000;border-bottom:1px solid #000;"></div>
<div class="a" style="left:19px;top:36px;width:43px;height:18px;background:#fff;border-right:1px solid #c0c0c0;border-bottom:1px solid #c0c0c0;"></div>
<div class="a" style="left:19px;top:36px;width:40px;height:17px;overflow:hidden;"><div class="t" style="right:0;top:2.70px;">2</div></div>
<div class="a" style="left:62px;top:36px;width:209px;height:18px;background:#fff;border-right:1px solid #c0c0c0;border-bottom:1px solid #c0c0c0;"></div>
<div class="a" style="left:62px;top:36px;width:208px;height:17px;overflow:hidden;"><div class="t" style="left:4px;top:2.70px;">öffentliche Institution</div></div>
<div class="a" style="left:0px;top:54px;width:19px;height:18px;background:#d4d0c8;box-shadow:inset 1px 1px #fff;border-right:1px solid #000;border-bottom:1px solid #000;"></div>
<div class="a" style="left:19px;top:54px;width:43px;height:18px;background:#fff;border-right:1px solid #c0c0c0;border-bottom:1px solid #c0c0c0;"></div>
<div class="a" style="left:19px;top:54px;width:40px;height:17px;overflow:hidden;"><div class="t" style="right:0;top:2.70px;">3</div></div>
<div class="a" style="left:62px;top:54px;width:209px;height:18px;background:#fff;border-right:1px solid #c0c0c0;border-bottom:1px solid #c0c0c0;"></div>
<div class="a" style="left:62px;top:54px;width:208px;height:17px;overflow:hidden;"><div class="t" style="left:4px;top:2.70px;">Private</div></div>
<div class="a" style="left:0px;top:72px;width:19px;height:18px;background:#d4d0c8;box-shadow:inset 1px 1px #fff;border-right:1px solid #000;border-bottom:1px solid #000;"></div>
<div class="a" style="left:19px;top:72px;width:43px;height:18px;background:#fff;border-right:1px solid #c0c0c0;border-bottom:1px solid #c0c0c0;"></div>
<div class="a" style="left:19px;top:72px;width:40px;height:17px;overflow:hidden;"><div class="t" style="right:0;top:2.70px;">4</div></div>
<div class="a" style="left:62px;top:72px;width:209px;height:18px;background:#fff;border-right:1px solid #c0c0c0;border-bottom:1px solid #c0c0c0;"></div>
<div class="a" style="left:62px;top:72px;width:208px;height:17px;overflow:hidden;"><div class="t" style="left:4px;top:2.70px;">soziale Institution</div></div>
<div class="a" style="left:0px;top:90px;width:19px;height:18px;background:#d4d0c8;box-shadow:inset 1px 1px #fff;border-right:1px solid #000;border-bottom:1px solid #000;"></div>
<div class="a" style="left:19px;top:90px;width:43px;height:18px;background:#fff;border-right:1px solid #c0c0c0;border-bottom:1px solid #c0c0c0;"></div>
<div class="a" style="left:19px;top:90px;width:40px;height:17px;overflow:hidden;"><div class="t" style="right:0;top:2.70px;">5</div></div>
<div class="a" style="left:62px;top:90px;width:209px;height:18px;background:#fff;border-right:1px solid #c0c0c0;border-bottom:1px solid #c0c0c0;"></div>
<div class="a" style="left:62px;top:90px;width:208px;height:17px;overflow:hidden;"><div class="t" style="left:4px;top:2.70px;">Stiftung</div></div>
<div class="a" style="left:0px;top:108px;width:19px;height:18px;background:#d4d0c8;box-shadow:inset 1px 1px #fff;border-right:1px solid #000;border-bottom:1px solid #000;"></div>
<div class="a" style="left:19px;top:108px;width:43px;height:18px;background:#fff;border-right:1px solid #c0c0c0;border-bottom:1px solid #c0c0c0;"></div>
<div class="a" style="left:19px;top:108px;width:40px;height:17px;overflow:hidden;"><div class="t" style="right:0;top:2.70px;">6</div></div>
<div class="a" style="left:62px;top:108px;width:209px;height:18px;background:#fff;border-right:1px solid #c0c0c0;border-bottom:1px solid #c0c0c0;"></div>
<div class="a" style="left:62px;top:108px;width:208px;height:17px;overflow:hidden;"><div class="t" style="left:4px;top:2.70px;">Vereine</div></div>
<div class="a" style="left:0px;top:126px;width:19px;height:18px;background:#d4d0c8;box-shadow:inset 1px 1px #fff;border-right:1px solid #000;border-bottom:1px solid #000;"></div>
<div class="a" style="left:19px;top:126px;width:43px;height:18px;background:#fff;border-right:1px solid #c0c0c0;border-bottom:1px solid #c0c0c0;"></div>
<div class="a" style="left:19px;top:126px;width:40px;height:17px;overflow:hidden;"><div class="t" style="right:0;top:2.70px;">7</div></div>
<div class="a" style="left:62px;top:126px;width:209px;height:18px;background:#fff;border-right:1px solid #c0c0c0;border-bottom:1px solid #c0c0c0;"></div>
<div class="a" style="left:62px;top:126px;width:208px;height:17px;overflow:hidden;"><div class="t" style="left:4px;top:2.70px;">Verlage</div></div>
<div class="a" style="left:0px;top:144px;width:19px;height:18px;background:#d4d0c8;box-shadow:inset 1px 1px #fff;border-right:1px solid #000;border-bottom:1px solid #000;"></div>
<svg class="a" style="left:5px;top:148px" width="9" height="9" viewBox="0 0 9 9" shape-rendering="crispEdges"><path d="M4 0h1v9h-1zM0 4h9v1h-9zM3 3h3v3h-3zM1 1h1v1h-1zM2 2h1v1h-1zM7 1h1v1h-1zM6 2h1v1h-1zM1 7h1v1h-1zM2 6h1v1h-1zM7 7h1v1h-1zM6 6h1v1h-1z" fill="#000"/></svg>
<div class="a" style="left:19px;top:144px;width:43px;height:18px;background:#fff;border-right:1px solid #c0c0c0;border-bottom:1px solid #c0c0c0;"></div>
<div class="a" style="left:19px;top:144px;width:40px;height:17px;overflow:hidden;"><div class="t" style="right:0;top:2.70px;">oWert)</div></div>
<div class="a" style="left:62px;top:144px;width:209px;height:18px;background:#fff;border-right:1px solid #c0c0c0;border-bottom:1px solid #c0c0c0;"></div>
</div>
<div class="a" style="left:17px;top:434px;width:305px;height:17px;background:#d4d0c8;"></div>
<div class="t" style="left:22.5px;top:439.19px;font-size:11px;line-height:11px;">Datensatz:</div>
<div class="a" style="left:81px;top:436px;width:20px;height:15px;background:#d4d0c8;box-shadow:inset -1px -1px #404040,inset 1px 1px #fff,inset -2px -2px #808080;"></div>
<div class="a" style="left:86px;top:440px;width:2px;height:7px;background:#000;"></div>
<div class="a" style="left:90px;top:440px;width:0px;height:0px;border-right:4px solid #000;border-top:3.5px solid transparent;border-bottom:3.5px solid transparent;"></div>
<div class="a" style="left:101px;top:436px;width:20px;height:15px;background:#d4d0c8;box-shadow:inset -1px -1px #404040,inset 1px 1px #fff,inset -2px -2px #808080;"></div>
<div class="a" style="left:108px;top:439.5px;width:0px;height:0px;border-right:4px solid #808080;border-top:4px solid transparent;border-bottom:4px solid transparent;"></div>
<div class="a" style="left:126px;top:436px;width:63px;height:15px;background:#fff;box-shadow:inset 1px 1px #000,inset -1px -1px #d4d0c8;"></div>
<div class="t" style="left:126px;top:439.19px;font-size:11px;line-height:11px;width:58px;text-align:right;">1</div>
<div class="a" style="left:193px;top:436px;width:20px;height:15px;background:#d4d0c8;box-shadow:inset -1px -1px #404040,inset 1px 1px #fff,inset -2px -2px #808080;"></div>
<div class="a" style="left:200px;top:439.5px;width:0px;height:0px;border-left:4px solid #000;border-top:4px solid transparent;border-bottom:4px solid transparent;"></div>
<div class="a" style="left:213px;top:436px;width:20px;height:15px;background:#d4d0c8;box-shadow:inset -1px -1px #404040,inset 1px 1px #fff,inset -2px -2px #808080;"></div>
<div class="a" style="left:218px;top:439.5px;width:0px;height:0px;border-left:4px solid #000;border-top:4px solid transparent;border-bottom:4px solid transparent;"></div>
<div class="a" style="left:224px;top:440px;width:2px;height:7px;background:#000;"></div>
<div class="a" style="left:233px;top:436px;width:20px;height:15px;background:#d4d0c8;box-shadow:inset -1px -1px #404040,inset 1px 1px #fff,inset -2px -2px #808080;"></div>
<div class="a" style="left:236px;top:440px;width:0px;height:0px;border-left:4px solid #000;border-top:3.5px solid transparent;border-bottom:3.5px solid transparent;"></div>
<svg class="a" style="left:242px;top:440px" width="7" height="7" viewBox="0 0 7 7" shape-rendering="crispEdges"><path d="M3 0h1v7h-1zM0 3h7v1h-7zM2 2h3v3h-3zM1 1h1v1h-1zM5 1h1v1h-1zM1 5h1v1h-1zM5 5h1v1h-1z" fill="#000"/></svg>
<div class="t" style="left:259px;top:439.19px;font-size:11px;line-height:11px;">von</div>
<div class="t" style="left:282.5px;top:439.19px;font-size:11px;line-height:11px;">7</div>
<div class="a" style="left:328px;top:266px;width:332px;height:188px;background:#d4d0c8;box-shadow:inset 1px 1px #d4d0c8,inset -1px -1px #fff,inset 2px 2px #000,inset -2px -2px #d4d0c8;"></div>
<div class="a" style="left:330px;top:268px;width:312px;height:167px;overflow:hidden;background:#808080;font-size:13px;line-height:13px;">
<div class="a" style="left:0px;top:0px;width:19px;height:18px;background:#d4d0c8;box-shadow:inset 1px 1px #fff;border-right:1px solid #000;border-bottom:1px solid #000;"></div>
<div class="a" style="left:19px;top:0px;width:43px;height:18px;background:#d4d0c8;box-shadow:inset 1px 1px #fff;border-right:1px solid #000;border-bottom:1px solid #000;"></div>
<div class="t" style="left:19px;top:2.00px;width:42px;text-align:center;font-size:13px;line-height:13px;letter-spacing:0px">ID</div>
<div class="a" style="left:62px;top:0px;width:250px;height:18px;background:#d4d0c8;box-shadow:inset 1px 1px #fff;border-right:1px solid #000;border-bottom:1px solid #000;"></div>
<div class="t" style="left:62px;top:2.00px;width:249px;text-align:center;font-size:13px;line-height:13px;letter-spacing:0px">Bezeichnung</div>
<div class="a" style="left:0px;top:18px;width:19px;height:18px;background:#d4d0c8;box-shadow:inset 1px 1px #fff;border-right:1px solid #000;border-bottom:1px solid #000;"></div>
<div class="a" style="left:7px;top:21.0px;width:0;height:0;border-left:6px solid #000;border-top:5.5px solid transparent;border-bottom:5.5px solid transparent;"></div>
<div class="a" style="left:19px;top:18px;width:43px;height:18px;background:#fff;border-right:1px solid #c0c0c0;border-bottom:1px solid #c0c0c0;"></div>
<div class="a" style="left:19px;top:18px;width:41px;height:17px;overflow:hidden;"><div class="a" style="right:0;top:1px;height:16px;background:#000;color:#fff;white-space:nowrap"><span style="position:relative;top:1.30px">1</span></div></div>
<div class="a" style="left:62px;top:18px;width:250px;height:18px;background:#fff;border-right:1px solid #c0c0c0;border-bottom:1px solid #c0c0c0;"></div>
<div class="a" style="left:62px;top:18px;width:249px;height:17px;overflow:hidden;"><div class="t" style="left:3px;top:2.30px;">Ausstellungen</div></div>
<div class="a" style="left:0px;top:36px;width:19px;height:18px;background:#d4d0c8;box-shadow:inset 1px 1px #fff;border-right:1px solid #000;border-bottom:1px solid #000;"></div>
<div class="a" style="left:19px;top:36px;width:43px;height:18px;background:#fff;border-right:1px solid #c0c0c0;border-bottom:1px solid #c0c0c0;"></div>
<div class="a" style="left:19px;top:36px;width:40.5px;height:17px;overflow:hidden;"><div class="t" style="right:0;top:2.30px;">2</div></div>
<div class="a" style="left:62px;top:36px;width:250px;height:18px;background:#fff;border-right:1px solid #c0c0c0;border-bottom:1px solid #c0c0c0;"></div>
<div class="a" style="left:62px;top:36px;width:249px;height:17px;overflow:hidden;"><div class="t" style="left:3px;top:2.30px;">Bauten</div></div>
<div class="a" style="left:0px;top:54px;width:19px;height:18px;background:#d4d0c8;box-shadow:inset 1px 1px #fff;border-right:1px solid #000;border-bottom:1px solid #000;"></div>
<div class="a" style="left:19px;top:54px;width:43px;height:18px;background:#fff;border-right:1px solid #c0c0c0;border-bottom:1px solid #c0c0c0;"></div>
<div class="a" style="left:19px;top:54px;width:40.5px;height:17px;overflow:hidden;"><div class="t" style="right:0;top:2.30px;">3</div></div>
<div class="a" style="left:62px;top:54px;width:250px;height:18px;background:#fff;border-right:1px solid #c0c0c0;border-bottom:1px solid #c0c0c0;"></div>
<div class="a" style="left:62px;top:54px;width:249px;height:17px;overflow:hidden;"><div class="t" style="left:3px;top:2.30px;">Bücher, Kataloge, Publikationen, Chronike</div></div>
<div class="a" style="left:0px;top:72px;width:19px;height:18px;background:#d4d0c8;box-shadow:inset 1px 1px #fff;border-right:1px solid #000;border-bottom:1px solid #000;"></div>
<div class="a" style="left:19px;top:72px;width:43px;height:18px;background:#fff;border-right:1px solid #c0c0c0;border-bottom:1px solid #c0c0c0;"></div>
<div class="a" style="left:19px;top:72px;width:40.5px;height:17px;overflow:hidden;"><div class="t" style="right:0;top:2.30px;">4</div></div>
<div class="a" style="left:62px;top:72px;width:250px;height:18px;background:#fff;border-right:1px solid #c0c0c0;border-bottom:1px solid #c0c0c0;"></div>
<div class="a" style="left:62px;top:72px;width:249px;height:17px;overflow:hidden;"><div class="t" style="left:3px;top:2.30px;">Filme, Fotos, Kino, Videos</div></div>
<div class="a" style="left:0px;top:90px;width:19px;height:18px;background:#d4d0c8;box-shadow:inset 1px 1px #fff;border-right:1px solid #000;border-bottom:1px solid #000;"></div>
<div class="a" style="left:19px;top:90px;width:43px;height:18px;background:#fff;border-right:1px solid #c0c0c0;border-bottom:1px solid #c0c0c0;"></div>
<div class="a" style="left:19px;top:90px;width:40.5px;height:17px;overflow:hidden;"><div class="t" style="right:0;top:2.30px;">5</div></div>
<div class="a" style="left:62px;top:90px;width:250px;height:18px;background:#fff;border-right:1px solid #c0c0c0;border-bottom:1px solid #c0c0c0;"></div>
<div class="a" style="left:62px;top:90px;width:249px;height:17px;overflow:hidden;"><div class="t" style="left:3px;top:2.30px;">Jubiläen</div></div>
<div class="a" style="left:0px;top:108px;width:19px;height:18px;background:#d4d0c8;box-shadow:inset 1px 1px #fff;border-right:1px solid #000;border-bottom:1px solid #000;"></div>
<div class="a" style="left:19px;top:108px;width:43px;height:18px;background:#fff;border-right:1px solid #c0c0c0;border-bottom:1px solid #c0c0c0;"></div>
<div class="a" style="left:19px;top:108px;width:40.5px;height:17px;overflow:hidden;"><div class="t" style="right:0;top:2.30px;">6</div></div>
<div class="a" style="left:62px;top:108px;width:250px;height:18px;background:#fff;border-right:1px solid #c0c0c0;border-bottom:1px solid #c0c0c0;"></div>
<div class="a" style="left:62px;top:108px;width:249px;height:17px;overflow:hidden;"><div class="t" style="left:3px;top:2.30px;">Konzerte, Musical, Musik, Oper</div></div>
<div class="a" style="left:0px;top:126px;width:19px;height:18px;background:#d4d0c8;box-shadow:inset 1px 1px #fff;border-right:1px solid #000;border-bottom:1px solid #000;"></div>
<div class="a" style="left:19px;top:126px;width:43px;height:18px;background:#fff;border-right:1px solid #c0c0c0;border-bottom:1px solid #c0c0c0;"></div>
<div class="a" style="left:19px;top:126px;width:40.5px;height:17px;overflow:hidden;"><div class="t" style="right:0;top:2.30px;">7</div></div>
<div class="a" style="left:62px;top:126px;width:250px;height:18px;background:#fff;border-right:1px solid #c0c0c0;border-bottom:1px solid #c0c0c0;"></div>
<div class="a" style="left:62px;top:126px;width:249px;height:17px;overflow:hidden;"><div class="t" style="left:3px;top:2.30px;">Kunstgegenstände</div></div>
<div class="a" style="left:0px;top:144px;width:19px;height:18px;background:#d4d0c8;box-shadow:inset 1px 1px #fff;border-right:1px solid #000;border-bottom:1px solid #000;"></div>
<div class="a" style="left:19px;top:144px;width:43px;height:18px;background:#fff;border-right:1px solid #c0c0c0;border-bottom:1px solid #c0c0c0;"></div>
<div class="a" style="left:19px;top:144px;width:40.5px;height:17px;overflow:hidden;"><div class="t" style="right:0;top:2.30px;">8</div></div>
<div class="a" style="left:62px;top:144px;width:250px;height:18px;background:#fff;border-right:1px solid #c0c0c0;border-bottom:1px solid #c0c0c0;"></div>
<div class="a" style="left:62px;top:144px;width:249px;height:17px;overflow:hidden;"><div class="t" style="left:3px;top:2.30px;">Sammlungen</div></div>
<div class="a" style="left:0px;top:162px;width:19px;height:18px;background:#d4d0c8;box-shadow:inset 1px 1px #fff;border-right:1px solid #000;border-bottom:1px solid #000;"></div>
<div class="a" style="left:19px;top:162px;width:43px;height:18px;background:#fff;border-right:1px solid #c0c0c0;border-bottom:1px solid #c0c0c0;"></div>
<div class="a" style="left:19px;top:162px;width:40.5px;height:17px;overflow:hidden;"><div class="t" style="right:0;top:2.30px;">9</div></div>
<div class="a" style="left:62px;top:162px;width:250px;height:18px;background:#fff;border-right:1px solid #c0c0c0;border-bottom:1px solid #c0c0c0;"></div>
<div class="a" style="left:62px;top:162px;width:249px;height:17px;overflow:hidden;"><div class="t" style="left:3px;top:2.30px;">Ferien, Themen, Selbsthilfe, soziale Arbeit</div></div>
</div>
<div class="a" style="left:330px;top:435px;width:328px;height:17px;background:#d4d0c8;"></div>
<div class="t" style="left:335.5px;top:440.19px;font-size:11px;line-height:11px;">Datensatz:</div>
<div class="a" style="left:394px;top:437px;width:20px;height:15px;background:#d4d0c8;box-shadow:inset -1px -1px #404040,inset 1px 1px #fff,inset -2px -2px #808080;"></div>
<div class="a" style="left:399px;top:441px;width:2px;height:7px;background:#000;"></div>
<div class="a" style="left:403px;top:441px;width:0px;height:0px;border-right:4px solid #000;border-top:3.5px solid transparent;border-bottom:3.5px solid transparent;"></div>
<div class="a" style="left:414px;top:437px;width:20px;height:15px;background:#d4d0c8;box-shadow:inset -1px -1px #404040,inset 1px 1px #fff,inset -2px -2px #808080;"></div>
<div class="a" style="left:421px;top:440.5px;width:0px;height:0px;border-right:4px solid #808080;border-top:4px solid transparent;border-bottom:4px solid transparent;"></div>
<div class="a" style="left:439px;top:437px;width:63px;height:15px;background:#fff;box-shadow:inset 1px 1px #000,inset -1px -1px #d4d0c8;"></div>
<div class="t" style="left:439px;top:440.19px;font-size:11px;line-height:11px;width:58px;text-align:right;">1</div>
<div class="a" style="left:506px;top:437px;width:20px;height:15px;background:#d4d0c8;box-shadow:inset -1px -1px #404040,inset 1px 1px #fff,inset -2px -2px #808080;"></div>
<div class="a" style="left:513px;top:440.5px;width:0px;height:0px;border-left:4px solid #000;border-top:4px solid transparent;border-bottom:4px solid transparent;"></div>
<div class="a" style="left:526px;top:437px;width:20px;height:15px;background:#d4d0c8;box-shadow:inset -1px -1px #404040,inset 1px 1px #fff,inset -2px -2px #808080;"></div>
<div class="a" style="left:531px;top:440.5px;width:0px;height:0px;border-left:4px solid #000;border-top:4px solid transparent;border-bottom:4px solid transparent;"></div>
<div class="a" style="left:537px;top:441px;width:2px;height:7px;background:#000;"></div>
<div class="a" style="left:546px;top:437px;width:20px;height:15px;background:#d4d0c8;box-shadow:inset -1px -1px #404040,inset 1px 1px #fff,inset -2px -2px #808080;"></div>
<div class="a" style="left:549px;top:441px;width:0px;height:0px;border-left:4px solid #000;border-top:3.5px solid transparent;border-bottom:3.5px solid transparent;"></div>
<svg class="a" style="left:555px;top:441px" width="7" height="7" viewBox="0 0 7 7" shape-rendering="crispEdges"><path d="M3 0h1v7h-1zM0 3h7v1h-7zM2 2h3v3h-3zM1 1h1v1h-1zM5 1h1v1h-1zM1 5h1v1h-1zM5 5h1v1h-1z" fill="#000"/></svg>
<div class="t" style="left:572px;top:440.19px;font-size:11px;line-height:11px;">von</div>
<div class="t" style="left:595.5px;top:440.19px;font-size:11px;line-height:11px;">10</div>
<div class="a" style="left:642px;top:268px;width:16px;height:168px;background-color:#fff;background-image:repeating-conic-gradient(#d4d0c8 0 25%,#fff 0 50%);background-size:2px 2px;"></div>
<div class="a" style="left:642px;top:268px;width:16px;height:16px;background:#d4d0c8;box-shadow:inset -1px -1px #404040,inset 1px 1px #fff,inset -2px -2px #808080;"></div>
<div class="a" style="left:646px;top:274px;width:0px;height:0px;border-bottom:4px solid #000;border-left:4px solid transparent;border-right:4px solid transparent;"></div>
<div class="a" style="left:642px;top:284px;width:16px;height:56px;background:#d4d0c8;box-shadow:inset -1px -1px #404040,inset 1px 1px #fff,inset -2px -2px #808080;"></div>
<div class="a" style="left:642px;top:420px;width:16px;height:16px;background:#d4d0c8;box-shadow:inset -1px -1px #404040,inset 1px 1px #fff,inset -2px -2px #808080;"></div>
<div class="a" style="left:646px;top:426px;width:0px;height:0px;border-top:4px solid #000;border-left:4px solid transparent;border-right:4px solid transparent;"></div>
<div class="t" style="left:335.5px;top:46.19px;font-size:11px;line-height:11px;font-weight:bold;letter-spacing:0.3px;-webkit-text-stroke:0.25px #000;">Sitzungen</div>
<div class="t" style="left:17.5px;top:254.49px;font-size:11px;line-height:11px;font-weight:bold;letter-spacing:0.3px;-webkit-text-stroke:0.25px #000;">Kategorien</div>
<div class="t" style="left:330.5px;top:253.99px;font-size:11px;line-height:11px;font-weight:bold;letter-spacing:0.4px;-webkit-text-stroke:0.25px #000;">Gesuch-Kategorien</div>
</body></html>
